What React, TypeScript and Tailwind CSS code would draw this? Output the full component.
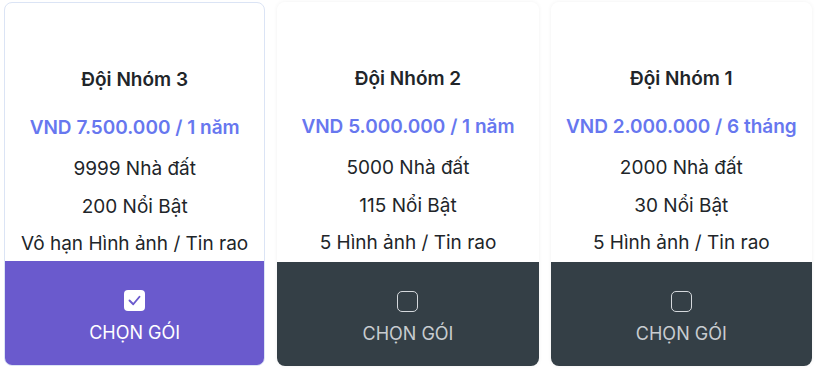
import { useState } from 'react'

interface Plan {
  id: number
  name: string
  price: string
  listings: string
  featured: string
  images: string
}

const PLANS: Plan[] = [
  { id: 3, name: 'Đội Nhóm 3', price: 'VND 7.500.000 / 1 năm', listings: '9999 Nhà đất', featured: '200 Nổi Bật', images: 'Vô hạn Hình ảnh / Tin rao' },
  { id: 2, name: 'Đội Nhóm 2', price: 'VND 5.000.000 / 1 năm', listings: '5000 Nhà đất', featured: '115 Nổi Bật', images: '5 Hình ảnh / Tin rao' },
  { id: 1, name: 'Đội Nhóm 1', price: 'VND 2.000.000 / 6 tháng', listings: '2000 Nhà đất', featured: '30 Nổi Bật', images: '5 Hình ảnh / Tin rao' },
]

function CheckBox({ checked }: { checked: boolean }) {
  if (checked) {
    return (
      <span className="flex h-[21px] w-[21px] items-center justify-center rounded-[4px] bg-white">
        <svg width="15" height="15" viewBox="0 0 24 24" fill="none" stroke="#6a5acd" strokeWidth="3" strokeLinecap="round" strokeLinejoin="round">
          <polyline points="4 12 10 18 20 6" />
        </svg>
      </span>
    )
  }
  return <span className="block h-[21px] w-[21px] rounded-[5px] border border-[#d4d8dc]" />
}

export default function App() {
  const [selected, setSelected] = useState(3)

  return (
    <div className="min-h-[371px] bg-white px-1 pt-[2px] font-['Inter',sans-serif]">
      <div className="grid grid-cols-3 gap-3 w-[808px]">
        {PLANS.map((plan) => {
          const active = plan.id === selected
          return (
            <div
              key={plan.id}
              className={`flex h-[364px] flex-col overflow-hidden rounded-lg bg-white ${
                active ? 'border border-[#dbe4f5]' : 'shadow-[0_0_4px_rgba(0,0,0,0.06)]'
              }`}
            >
              <div className="flex flex-1 flex-col items-center pt-[64px] text-[19px] text-[#212529]">
                <h3 className="font-semibold leading-[26px]">{plan.name}</h3>
                <p className="mt-[22px] font-semibold leading-[26px] text-[#6777ef]">{plan.price}</p>
                <p className="mt-[15px] leading-[26px]">{plan.listings}</p>
                <p className="mt-[12px] leading-[26px]">{plan.featured}</p>
                <p className="mt-[11px] leading-[26px]">{plan.images}</p>
              </div>
              <button
                type="button"
                onClick={() => setSelected(plan.id)}
                className={`flex h-[104px] flex-col items-center justify-center gap-[10px] pt-[8px] ${
                  active ? 'bg-[#6a5acd] text-white' : 'bg-[#343f46] text-[#c8ccd0]'
                }`}
              >
                <CheckBox checked={active} />
                <span className="text-[18px] leading-[24px]">CHỌN GÓI</span>
              </button>
            </div>
          )
        })}
      </div>
    </div>
  )
}
